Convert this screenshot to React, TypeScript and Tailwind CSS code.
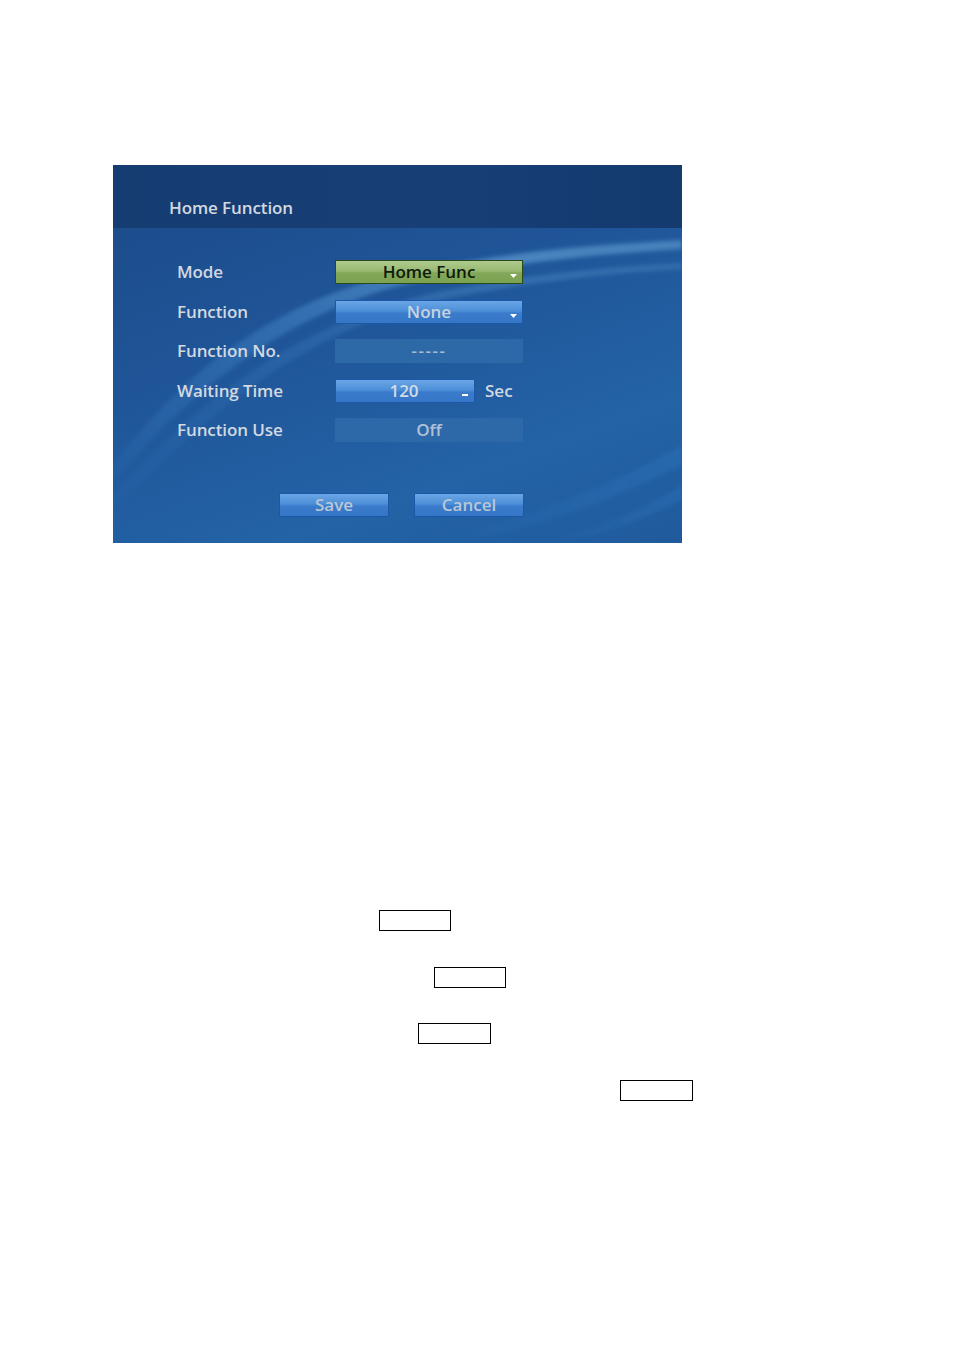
import React from "react";

const font = { fontFamily: '"Open Sans", "Noto Sans", "DejaVu Sans", sans-serif' };

function Arrow() {
  return (
    <svg width="7" height="4" viewBox="0 0 7 4" className="absolute right-[5px] bottom-[5px]">
      <path d="M0 0 H7 L3.5 4 Z" fill="#ffffff" />
    </svg>
  );
}

function Row({ label, children, mt }: { label: string; children: React.ReactNode; mt: string }) {
  return (
    <div className={`flex items-center h-[24px] ${mt}`}>
      <div className="w-[158px] text-[17px] font-semibold text-[#d3d9e1] tracking-[-0.1px]">{label}</div>
      {children}
    </div>
  );
}

const blueBtn =
  "relative h-[24px] flex items-center justify-center border border-[#1d58a8] bg-[linear-gradient(to_bottom,#6aa6e6_0%,#4d8fd8_45%,#3a7ccb_55%,#3577c6_100%)] text-[17px] font-semibold";
const flatBox = "h-[24px] flex items-center justify-center bg-[#2f6aa9]/90 text-[17px] font-semibold";

export default function App() {
  return (
    <div className="min-h-[1350px] w-[954px] bg-white" style={font}>
      <div className="pt-[165px] pl-[113px]">
        <div className="relative w-[569px] h-[378px] overflow-hidden bg-[linear-gradient(160deg,#1b4a87_0%,#1f5598_40%,#2363a6_75%,#1f5a9c_100%)]">
          <svg className="absolute inset-0" width="569" height="378" viewBox="0 0 569 378">
            <defs>
              <linearGradient id="sw1" x1="0" y1="1" x2="1" y2="0">
                <stop offset="0" stopColor="#4d9be0" stopOpacity="0.05" />
                <stop offset="0.4" stopColor="#5aa6e8" stopOpacity="0.25" />
                <stop offset="0.8" stopColor="#7fc0f2" stopOpacity="0.45" />
                <stop offset="1" stopColor="#8fcaf5" stopOpacity="0.35" />
              </linearGradient>
              <linearGradient id="sw2" x1="0" y1="0" x2="1" y2="0">
                <stop offset="0" stopColor="#3f8ad8" stopOpacity="0" />
                <stop offset="1" stopColor="#3f8ad8" stopOpacity="0.2" />
              </linearGradient>
              <filter id="blur"><feGaussianBlur stdDeviation="2" /></filter>
            </defs>
            <g filter="url(#blur)">
              <path d="M0 300 C 60 220, 150 140, 280 110 C 380 88, 480 80, 569 75 L569 84 C 470 90, 380 100, 290 120 C 170 150, 70 232, 0 318 Z" fill="url(#sw1)" />
              <path d="M0 330 C 80 240, 180 160, 320 128 C 420 108, 500 102, 569 98 L569 104 C 500 108, 420 116, 320 136 C 190 167, 90 252, 0 347 Z" fill="url(#sw1)" opacity="0.5" />
              <path d="M300 378 C 400 360, 500 320, 569 280 L569 300 C 500 335, 420 365, 340 378 Z" fill="url(#sw2)" />
              <path d="M420 378 C 480 365, 530 345, 569 320 L569 335 C 530 355, 490 370, 450 378 Z" fill="url(#sw2)" />
            </g>
          </svg>
          <div className="relative">
            <div className="h-[63px] bg-[linear-gradient(to_right,#163d72,#173f76_60%,#143a6e)] pl-[56px] pt-[32px]">
              <div className="text-[17px] font-semibold leading-[22px] text-[#d3d9e1] tracking-[-0.1px]">Home Function</div>
            </div>
            <div className="pl-[64px]">
              <Row label="Mode" mt="mt-[32px]">
                <div className="relative w-[188px] h-[24px] flex items-center justify-center border border-[#2a4a1a] bg-[linear-gradient(to_bottom,#b0cb8e_0%,#98b972_45%,#82a758_55%,#7ba352_100%)] text-[17px] font-semibold text-[#0f1a08]">
                  Home Func
                  <Arrow />
                </div>
              </Row>
              <Row label="Function" mt="mt-[16px]">
                <div className={`${blueBtn} w-[188px] text-[#c9d3de]`}>
                  None
                  <Arrow />
                </div>
              </Row>
              <Row label="Function No." mt="mt-[15px]">
                <div className={`${flatBox} w-[188px] text-[#a8bbd2] tracking-[1.5px]`}>-----</div>
              </Row>
              <Row label="Waiting Time" mt="mt-[16px]">
                <div className={`${blueBtn} w-[140px] text-[#d3dbe4]`}>
                  <span className="-ml-[2px]">120</span>
                  <div className="absolute right-[6px] bottom-[6px] w-[6px] h-[2px] bg-white" />
                </div>
                <div className="ml-[10px] text-[17px] font-semibold text-[#d3d9e1]">Sec</div>
              </Row>
              <Row label="Function Use" mt="mt-[15px]">
                <div className={`${flatBox} w-[188px] text-[#b0c2d8]`}>Off</div>
              </Row>
            </div>
            <div className="flex pl-[166px] mt-[51px] gap-[25px]">
              <div className={`${blueBtn} w-[110px] text-[#b9c7d6]`}>Save</div>
              <div className={`${blueBtn} w-[110px] text-[#b9c7d6]`}>Cancel</div>
            </div>
          </div>
        </div>
        <div className="-ml-[113px]">
          <div className="mt-[367px] ml-[379px] w-[72px] h-[21px] border border-black" />
          <div className="mt-[36px] ml-[434px] w-[72px] h-[21px] border border-black" />
          <div className="mt-[35px] ml-[418px] w-[73px] h-[21px] border border-black" />
          <div className="mt-[36px] ml-[620px] w-[73px] h-[21px] border border-black" />
        </div>
      </div>
    </div>
  );
}
